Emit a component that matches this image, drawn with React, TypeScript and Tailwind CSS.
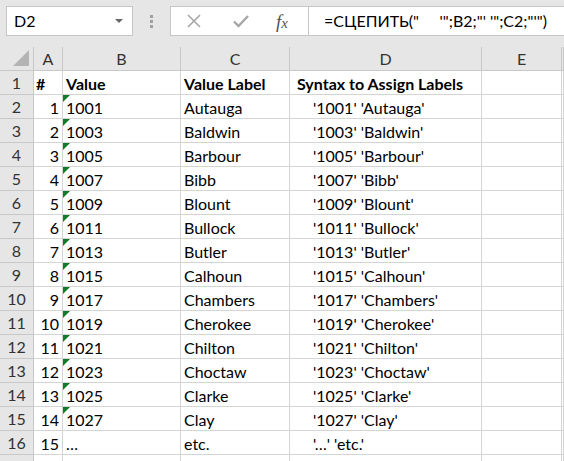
import React from "react";

const rows: [string, string, string, string][] = [
  ["1", "1001", "Autauga", "'1001' 'Autauga'"],
  ["2", "1003", "Baldwin", "'1003' 'Baldwin'"],
  ["3", "1005", "Barbour", "'1005' 'Barbour'"],
  ["4", "1007", "Bibb", "'1007' 'Bibb'"],
  ["5", "1009", "Blount", "'1009' 'Blount'"],
  ["6", "1011", "Bullock", "'1011' 'Bullock'"],
  ["7", "1013", "Butler", "'1013' 'Butler'"],
  ["8", "1015", "Calhoun", "'1015' 'Calhoun'"],
  ["9", "1017", "Chambers", "'1017' 'Chambers'"],
  ["10", "1019", "Cherokee", "'1019' 'Cherokee'"],
  ["11", "1021", "Chilton", "'1021' 'Chilton'"],
  ["12", "1023", "Choctaw", "'1023' 'Choctaw'"],
  ["13", "1025", "Clarke", "'1025' 'Clarke'"],
  ["14", "1027", "Clay", "'1027' 'Clay'"],
  ["15", "…", "etc.", "'…' 'etc.'"],
];

const cols = "grid grid-cols-[34px_29px_118px_109px_192px_80px_1fr]";
const cell = "h-[24px] border-r border-b border-[#d4d4d4] bg-white flex items-center pt-[2px] text-[16px] text-black whitespace-pre overflow-hidden";
const head = "h-[24px] border-r border-b border-[#c8c8c8] bg-[#e6e6e6] flex items-center justify-center pt-[1px] text-[16px] text-[#333]";

function FlagCell({ text }: { text: string }) {
  return (
    <div className={`${cell} relative pl-[3px]`}>
      <span className="absolute left-0 top-0 w-0 h-0 border-t-[7px] border-t-[#137a2c] border-r-[7px] border-r-transparent" />
      {text}
    </div>
  );
}

export default function App() {
  return (
    <div className="w-[564px] h-[461px] overflow-hidden bg-[#e6e6e6] font-['Lato','Liberation_Sans',sans-serif]">
      {/* formula bar */}
      <div className="h-[47px] flex items-start pt-[6px] pl-[6px]">
        <div className="w-[127px] h-[30px] bg-white border border-[#c6c6c6] flex items-center justify-between pl-[7px] pr-[9px] text-[16px] text-black">
          <span>D2</span>
          <span className="w-0 h-0 border-l-[4px] border-r-[4px] border-t-[4px] border-l-transparent border-r-transparent border-t-[#666]" />
        </div>
        <div className="w-[37px] h-[30px] flex flex-col items-center justify-center gap-[2px]">
          <span className="w-[3px] h-[3px] bg-[#a0a0a0]" />
          <span className="w-[3px] h-[3px] bg-[#a0a0a0]" />
          <span className="w-[3px] h-[3px] bg-[#a0a0a0]" />
        </div>
        <div className="flex-1 h-[30px] bg-white border border-[#c6c6c6] border-r-0 flex items-center">
          <div className="w-[138px] h-full flex items-center border-r border-[#c6c6c6]">
            <svg className="ml-[16px]" width="14" height="14" viewBox="0 0 14 14">
              <path d="M1 1L13 13M13 1L1 13" stroke="#a6a6a6" strokeWidth="1.6" fill="none" />
            </svg>
            <svg className="ml-[32px]" width="16" height="14" viewBox="0 0 16 14">
              <path d="M1 7.5L5.5 12L15 2" stroke="#a6a6a6" strokeWidth="2.4" fill="none" />
            </svg>
            <span className="ml-[27px] text-[19px] italic text-[#555] font-['Liberation_Serif',serif] leading-none">
              f<span className="text-[15px]">x</span>
            </span>
          </div>
          <div className="pl-[15px] text-[16px] text-black whitespace-pre">
            {'=СЦЕПИТЬ("     \'";B2;"\' \'";C2;"\'")'}
          </div>
        </div>
      </div>

      {/* sheet */}
      <div className={cols}>
        <div className={`${head} relative`}>
          <span className="absolute right-[4px] bottom-[4px] w-0 h-0 border-l-[16px] border-l-transparent border-b-[16px] border-b-[#b4b4b4]" />
        </div>
        {["A", "B", "C", "D", "E", ""].map((c, i) => (
          <div key={i} className={head}>{c}</div>
        ))}

        <div className={head}>1</div>
        <div className={`${cell} pl-[2px] font-bold`}>#</div>
        <div className={`${cell} pl-[3px] font-bold`}>Value</div>
        <div className={`${cell} pl-[3px] font-bold`}>Value Label</div>
        <div className={`${cell} pl-[7px] font-bold`}>Syntax to Assign Labels</div>
        <div className={cell} />
        <div className={cell} />

        {rows.map((r, i) => (
          <React.Fragment key={i}>
            <div className={head}>{i + 2}</div>
            <div className={`${cell} justify-end pr-[3px]`}>{r[0]}</div>
            {i < 14 ? <FlagCell text={r[1]} /> : <div className={`${cell} pl-[3px]`}>{r[1]}</div>}
            <div className={`${cell} pl-[3px]`}>{r[2]}</div>
            <div className={`${cell} pl-[23px]`}>{r[3]}</div>
            <div className={cell} />
            <div className={cell} />
          </React.Fragment>
        ))}

        <div className={head} />
        {[0, 1, 2, 3, 4, 5].map((k) => (
          <div key={k} className={cell} />
        ))}
      </div>
    </div>
  );
}
